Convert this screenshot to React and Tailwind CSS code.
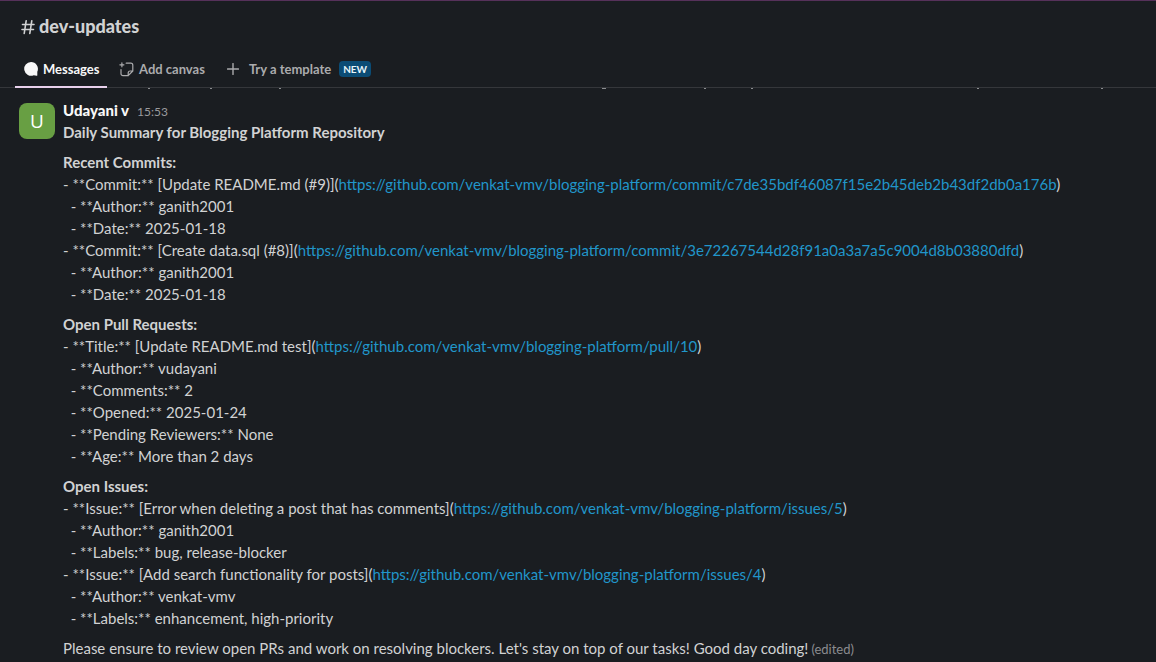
import React from "react";

const CLIPPED_MARKS = [[148, 2], [210, 2], [279, 2], [602, 4], [704, 2], [751, 2], [977, 2], [1101, 2]];

const REPO = "https://github.com/venkat-vmv/blogging-platform/";

const SECTIONS = [
  {
    title: "Recent Commits:",
    lines: [
      { text: "- **Commit:** [Update README.md (#9)](", link: "commit/c7de35bdf46087f15e2b45deb2b43df2db0a176b" },
      { text: "  - **Author:** ganith2001" },
      { text: "  - **Date:** 2025-01-18" },
      { text: "- **Commit:** [Create data.sql (#8)](", link: "commit/3e72267544d28f91a0a3a7a5c9004d8b03880dfd" },
      { text: "  - **Author:** ganith2001" },
      { text: "  - **Date:** 2025-01-18" },
    ],
  },
  {
    title: "Open Pull Requests:",
    lines: [
      { text: "- **Title:** [Update README.md test](", link: "pull/10" },
      { text: "  - **Author:** vudayani" },
      { text: "  - **Comments:** 2" },
      { text: "  - **Opened:** 2025-01-24" },
      { text: "  - **Pending Reviewers:** None" },
      { text: "  - **Age:** More than 2 days" },
    ],
  },
  {
    title: "Open Issues:",
    lines: [
      { text: "- **Issue:** [Error when deleting a post that has comments](", link: "issues/5" },
      { text: "  - **Author:** ganith2001" },
      { text: "  - **Labels:** bug, release-blocker" },
      { text: "- **Issue:** [Add search functionality for posts](", link: "issues/4" },
      { text: "  - **Author:** venkat-vmv" },
      { text: "  - **Labels:** enhancement, high-priority" },
    ],
  },
];

function HashIcon() {
  return (
    <svg className="h-4 w-[14px] shrink-0" viewBox="0 0 14 16" fill="none" stroke="currentColor" strokeWidth="1.6" strokeLinecap="round">
      <path d="M5.2 1.7 3.2 14.5M10.8 1.7 8.8 14.5M1.5 5.5H13M1 10.5H12.5" />
    </svg>
  );
}

function MessageIcon() {
  return (
    <svg className="h-[14px] w-[14px] shrink-0" viewBox="0 0 14 14" fill="currentColor">
      <path d="M7 0a6.9 6.9 0 0 1 6.3 9.8v3.4a.6.6 0 0 1-.7.6l-2.9-.5A6.9 6.9 0 1 1 7 0Z" />
    </svg>
  );
}

function CanvasIcon() {
  return (
    <svg className="h-[15px] w-[15px] shrink-0" viewBox="0 0 15 15" fill="none" stroke="currentColor" strokeWidth="1.2" strokeLinecap="round" strokeLinejoin="round">
      <path d="M2.9.8v4M.9 2.8h4M7.2 1.2h4.6a2 2 0 0 1 2 2v5.8l-4.6 4.7H4a2 2 0 0 1-2-2V7.6M13.8 9h-2.6a2 2 0 0 0-2 2v2.7" />
    </svg>
  );
}

function PlusIcon() {
  return (
    <svg className="h-3 w-3 shrink-0" viewBox="0 0 12 12" fill="none" stroke="currentColor" strokeWidth="1.4" strokeLinecap="round">
      <path d="M6 .6v10.8M.6 6h10.8" />
    </svg>
  );
}

function Line({ text, link }) {
  return (
    <div className="whitespace-pre">
      {text}
      {link && <><a className="text-[#2196ca]">{REPO + link}</a>)</>}
    </div>
  );
}

export default function App() {
  return (
    <div className="flex h-[662px] w-[1156px] flex-col overflow-hidden border-t border-[#56315a] bg-[#1a1d21] font-['Lato',sans-serif] text-[15px] leading-[22px] text-[#d1d2d3]">
      <header className="flex h-[51px] shrink-0 items-center gap-1 pl-[21px]">
        <HashIcon />
        <h1 className="pb-0.5 text-[18px] font-black leading-6">dev-updates</h1>
      </header>
      <nav className="flex h-9 shrink-0 border-b border-[#35373b] pl-[15px] text-[13px] font-bold text-[#ababad]">
        <div className="-mb-px flex h-9 w-[92px] items-center gap-[5px] border-b-2 border-[#e8d0ec] pl-[9px] text-[#f8f8f8]">
          <MessageIcon />
          <span>Messages</span>
        </div>
        <div className="ml-3 flex h-[34px] items-center gap-[5px]">
          <CanvasIcon />
          <span>Add canvas</span>
        </div>
        <div className="ml-[22px] flex h-[34px] items-center">
          <PlusIcon />
          <span className="ml-[10px]">Try a template</span>
          <span className="ml-2 flex h-4 w-8 items-center justify-center rounded bg-[#0b4c75] text-[10px] text-[#e8f5fa]">NEW</span>
        </div>
      </nav>
      <svg className="h-px w-full shrink-0" viewBox="0 0 1156 1" fill="#8b8d90">
        {CLIPPED_MARKS.map(([x, w]) => <rect key={x} x={x} y="0" width={w} height="1" />)}
      </svg>
      <article className="flex gap-2 pl-[19px] pt-[10px]">
        <div className="mt-1 flex h-9 w-9 shrink-0 items-center justify-center rounded-lg bg-[#689f43] pb-px font-['Open_Sans',sans-serif] text-[19px] text-white">U</div>
        <div className="whitespace-nowrap">
          <div className="flex h-[22px] items-baseline gap-2">
            <span className="font-black text-[#f8f8f8]">Udayani v</span>
            <time className="text-xs leading-[22px] text-[#9a9b9e]">15:53</time>
          </div>
          <div className="font-bold">Daily Summary for Blogging Platform Repository</div>
          {SECTIONS.map((section) => (
            <section key={section.title} className="mt-2">
              <h2 className="font-bold">{section.title}</h2>
              {section.lines.map((line, i) => <Line key={i} {...line} />)}
            </section>
          ))}
          <p className="mt-2">
            Please ensure to review open PRs and work on resolving blockers. Let's stay on top of our tasks! Good day coding!<span className="ml-[3px] text-[13px] text-[#8b8c8f]">(edited)</span>
          </p>
        </div>
      </article>
    </div>
  );
}
